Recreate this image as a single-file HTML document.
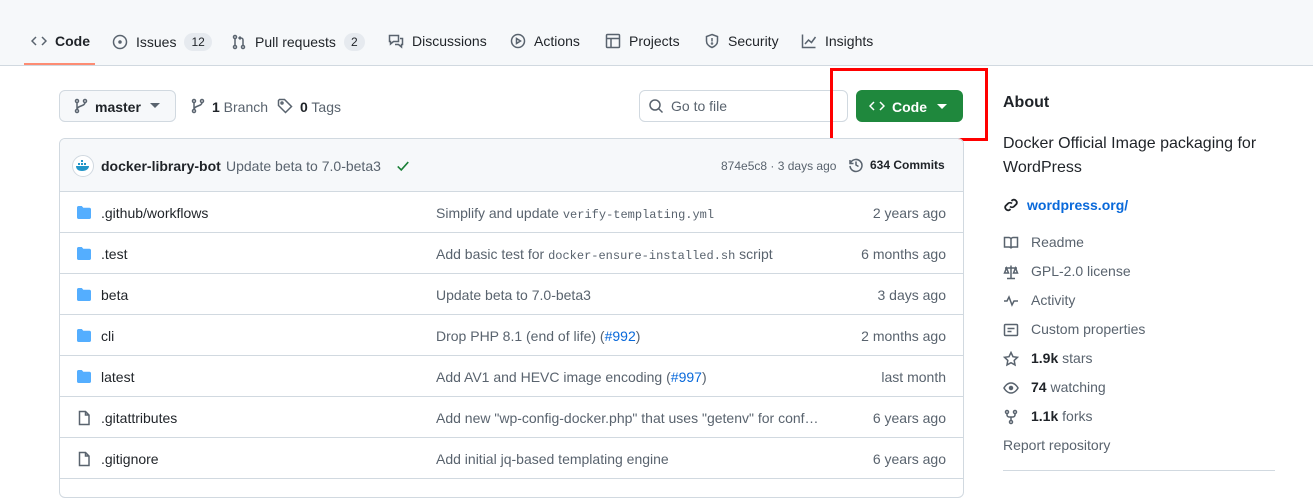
<!DOCTYPE html><html><head><meta charset="utf-8"><style>
*{box-sizing:border-box;margin:0;padding:0}
body{width:1313px;height:484px;overflow:hidden;background:#fff;font-family:"Liberation Sans",sans-serif;color:#1f2328;font-size:14px;position:relative}
.hdr{position:absolute;left:0;top:0;width:1313px;height:66px;background:#f6f8fa;border-bottom:1px solid #d1d9e0}
.tab{position:absolute;top:33px;display:flex;align-items:center;gap:8px;font-size:14px;color:#1f2328}
.tab svg{width:16px;height:16px;fill:none;stroke:#59636e;stroke-width:1.5}
.cnt{background:#e6eaef;border-radius:12px;padding:2px 7px;font-size:12px}
.ul{position:absolute;left:24px;top:63px;width:71px;height:2px;background:#fd8c73}
.abs{position:absolute}
.btn{position:absolute;border:1px solid #d1d9e0;border-radius:6px;background:#f6f8fa}
svg.i{fill:none;stroke:#59636e;stroke-width:1.5}
.box{position:absolute;left:59px;top:138px;width:905px;height:360px;border:1px solid #d1d9e0;border-radius:6px;overflow:hidden}
.ch{height:53px;background:#f6f8fa;border-bottom:1px solid #d1d9e0;position:relative}
.row{height:41px;border-bottom:1px solid #d1d9e0;position:relative}
.row .n{position:absolute;left:41px;top:13px}
.row .m{position:absolute;left:376px;top:13px;color:#59636e}
.row .a{position:absolute;right:17px;top:13px;color:#59636e}
.row svg{position:absolute;left:16px;top:13px}
code{font-family:"Liberation Mono",monospace;font-size:12px}
.lnk{color:#0969da}
.side{position:absolute;left:1003px;color:#59636e}
.side svg{position:absolute;left:0;top:1px}
.side span{position:absolute;left:28px;white-space:nowrap}
b{color:#1f2328}
</style></head><body>
<div class="hdr"></div>
<div class="tab" style="left:31px"><svg viewBox="0 0 16 16"><path d="M5 4L1 8l4 4M11 4l4 4-4 4"/></svg><b style="font-weight:600">Code</b></div>
<div class="tab" style="left:112px"><svg viewBox="0 0 16 16"><circle cx="8" cy="8" r="6.5"/><circle cx="8" cy="8" r="1" fill="#59636e"/></svg>Issues <span class="cnt">12</span></div>
<div class="tab" style="left:231px"><svg viewBox="0 0 16 16"><circle cx="4" cy="3" r="1.5"/><circle cx="4" cy="13" r="1.5"/><circle cx="12" cy="13" r="1.5"/><path d="M4 4.5v7M12 11.5V6a2 2 0 0 0-2-2H8M9.5 2.5L8 4l1.5 1.5"/></svg>Pull requests <span class="cnt">2</span></div>
<div class="tab" style="left:388px"><svg viewBox="0 0 16 16"><path d="M1.5 2.5h9v6h-5l-3 2.5v-2.5h-1zM12 5.5h2.5v6h-1V14l-3-2.5H7"/></svg>Discussions</div>
<div class="tab" style="left:510px"><svg viewBox="0 0 16 16"><circle cx="8" cy="8" r="6.5"/><path d="M6.5 5.5v5l4-2.5z"/></svg>Actions</div>
<div class="tab" style="left:605px"><svg viewBox="0 0 16 16"><rect x="1.5" y="1.5" width="13" height="13" rx="1"/><path d="M1.5 5.5h13M6 5.5v9"/></svg>Projects</div>
<div class="tab" style="left:704px"><svg viewBox="0 0 16 16"><path d="M8 1.5l5.5 2v4.5c0 3.5-3 5.5-5.5 6.5-2.5-1-5.5-3-5.5-6.5V3.5z"/><path d="M8 5v3.5"/><circle cx="8" cy="10.5" r=".5"/></svg>Security</div>
<div class="tab" style="left:801px"><svg viewBox="0 0 16 16"><path d="M1.5 1.5v13h13M4 11l3.5-4 3 2.5L14.5 4"/></svg>Insights</div>
<div class="ul"></div>

<div class="btn" style="left:59px;top:90px;width:117px;height:32px"></div>
<svg class="i abs" style="left:73px;top:98px" width="16" height="16" viewBox="0 0 16 16"><circle cx="4" cy="3" r="1.5"/><circle cx="4" cy="13" r="1.5"/><circle cx="12" cy="3" r="1.5"/><path d="M4 4.5v7M12 4.5c0 4-8 3-8 7"/></svg>
<div class="abs" style="left:95px;top:99px;font-weight:700">master</div>
<svg class="abs" style="left:150px;top:103px" width="10" height="6"><path d="M0 0h10L5 5z" fill="#59636e"/></svg>
<svg class="i abs" style="left:190px;top:98px" width="16" height="16" viewBox="0 0 16 16"><circle cx="4" cy="3" r="1.5"/><circle cx="4" cy="13" r="1.5"/><circle cx="12" cy="3" r="1.5"/><path d="M4 4.5v7M12 4.5c0 4-8 3-8 7"/></svg>
<div class="abs" style="left:212px;top:99px;color:#59636e"><b>1</b> Branch</div>
<svg class="i abs" style="left:277px;top:98px" width="16" height="16" viewBox="0 0 16 16"><path d="M1.5 2.5v5l7 7 6-6-7-7h-5z"/><circle cx="5" cy="5" r="1"/></svg>
<div class="abs" style="left:300px;top:99px;color:#59636e"><b>0</b> Tags</div>

<div class="btn" style="left:639px;top:90px;width:209px;height:32px;background:#fff"></div>
<svg class="i abs" style="left:648px;top:98px" width="16" height="16" viewBox="0 0 16 16"><circle cx="7" cy="7" r="5"/><path d="M10.5 10.5l4 4"/></svg>
<div class="abs" style="left:671px;top:98px;color:#59636e">Go to file</div>
<div class="abs" style="left:856px;top:90px;width:107px;height:32px;background:#1f883d;border-radius:6px;color:#fff"></div>
<svg class="abs" style="left:869px;top:98px" width="16" height="16" viewBox="0 0 16 16" fill="none" stroke="#fff" stroke-width="1.5"><path d="M5 4L1 8l4 4M11 4l4 4-4 4"/></svg>
<div class="abs" style="left:892px;top:99px;color:#fff;font-weight:700">Code</div>
<svg class="abs" style="left:937px;top:104px" width="10" height="6"><path d="M0 0h10L5 5z" fill="#fff"/></svg>
<div class="abs" style="left:830px;top:68px;width:158px;height:73px;border:3px solid #f00"></div>

<div class="box">
<div class="ch">
<div class="abs" style="left:12px;top:16px;width:22px;height:22px;border-radius:50%;border:1px solid #d1d9e0;background:#fff"><svg width="20" height="20" viewBox="0 0 20 20"><path d="M3 10h13c0 3-3 5-7 5s-6-2-6-5z" fill="#2396c8"/><rect x="5" y="7" width="2" height="2" fill="#2396c8"/><rect x="8" y="7" width="2" height="2" fill="#2396c8"/><rect x="11" y="7" width="2" height="2" fill="#2396c8"/><rect x="8" y="4" width="2" height="2" fill="#2396c8"/></svg></div>
<div class="abs" style="left:41px;top:19px;font-weight:700">docker-library-bot</div>
<div class="abs" style="left:166px;top:19px;color:#59636e">Update beta to 7.0-beta3</div>
<svg class="abs" style="left:336px;top:20px" width="14" height="14" viewBox="0 0 16 16" fill="none" stroke="#1a7f37" stroke-width="1.8"><path d="M2 8.5l4 4 8-9"/></svg>
<div class="abs" style="left:661px;top:20px;color:#59636e;font-size:12px">874e5c8 · 3 days ago</div>
<svg class="i abs" style="left:788px;top:18px" width="16" height="16" viewBox="0 0 16 16"><path d="M2 3v3.5h3.5"/><path d="M2.5 6A6 6 0 1 1 2 9"/><path d="M8 4.5V8l2.5 1.5"/></svg>
<div class="abs" style="left:810px;top:19px;font-weight:700;font-size:12px">634 Commits</div>
</div>
<div class="row"><svg width="16" height="16" viewBox="0 0 16 16"><path d="M1 2.5C1 1.7 1.7 1 2.5 1h3.3l1.5 1.8h6.2c.8 0 1.5.7 1.5 1.5v8.2c0 .8-.7 1.5-1.5 1.5h-11C1.7 14 1 13.3 1 12.5z" fill="#54aeff"/></svg><span class="n">.github/workflows</span><span class="m">Simplify and update <code>verify-templating.yml</code></span><span class="a">2 years ago</span></div>
<div class="row"><svg width="16" height="16" viewBox="0 0 16 16"><path d="M1 2.5C1 1.7 1.7 1 2.5 1h3.3l1.5 1.8h6.2c.8 0 1.5.7 1.5 1.5v8.2c0 .8-.7 1.5-1.5 1.5h-11C1.7 14 1 13.3 1 12.5z" fill="#54aeff"/></svg><span class="n">.test</span><span class="m">Add basic test for <code>docker-ensure-installed.sh</code> script</span><span class="a">6 months ago</span></div>
<div class="row"><svg width="16" height="16" viewBox="0 0 16 16"><path d="M1 2.5C1 1.7 1.7 1 2.5 1h3.3l1.5 1.8h6.2c.8 0 1.5.7 1.5 1.5v8.2c0 .8-.7 1.5-1.5 1.5h-11C1.7 14 1 13.3 1 12.5z" fill="#54aeff"/></svg><span class="n">beta</span><span class="m">Update beta to 7.0-beta3</span><span class="a">3 days ago</span></div>
<div class="row"><svg width="16" height="16" viewBox="0 0 16 16"><path d="M1 2.5C1 1.7 1.7 1 2.5 1h3.3l1.5 1.8h6.2c.8 0 1.5.7 1.5 1.5v8.2c0 .8-.7 1.5-1.5 1.5h-11C1.7 14 1 13.3 1 12.5z" fill="#54aeff"/></svg><span class="n">cli</span><span class="m">Drop PHP 8.1 (end of life) (<span class="lnk">#992</span>)</span><span class="a">2 months ago</span></div>
<div class="row"><svg width="16" height="16" viewBox="0 0 16 16"><path d="M1 2.5C1 1.7 1.7 1 2.5 1h3.3l1.5 1.8h6.2c.8 0 1.5.7 1.5 1.5v8.2c0 .8-.7 1.5-1.5 1.5h-11C1.7 14 1 13.3 1 12.5z" fill="#54aeff"/></svg><span class="n">latest</span><span class="m">Add AV1 and HEVC image encoding (<span class="lnk">#997</span>)</span><span class="a">last month</span></div>
<div class="row"><svg class="i" width="16" height="16" viewBox="0 0 16 16"><path d="M3.5 1.5h6l3.5 3.5v9.5h-9.5zM9.5 1.5V5H13"/></svg><span class="n">.gitattributes</span><span class="m">Add new "wp-config-docker.php" that uses "getenv" for conf…</span><span class="a">6 years ago</span></div>
<div class="row"><svg class="i" width="16" height="16" viewBox="0 0 16 16"><path d="M3.5 1.5h6l3.5 3.5v9.5h-9.5zM9.5 1.5V5H13"/></svg><span class="n">.gitignore</span><span class="m">Add initial jq-based templating engine</span><span class="a">6 years ago</span></div>
</div>

<div class="abs" style="left:1003px;top:94px;font-size:16px;font-weight:700">About</div>
<div class="abs" style="left:1003px;top:132px;font-size:16px;line-height:24px;width:280px">Docker Official Image packaging for WordPress</div>
<svg class="abs" style="left:1003px;top:197px" width="16" height="16" viewBox="0 0 16 16" fill="none" stroke="#1f2328" stroke-width="1.8"><path d="M7 9.5a3 3 0 0 0 4 0l2.5-2.5a3 3 0 0 0-4-4L8.5 4M9 6.5a3 3 0 0 0-4 0L2.5 9a3 3 0 0 0 4 4l1-1"/></svg>
<div class="abs lnk" style="left:1027px;top:197px;font-weight:700">wordpress.org/</div>
<div class="side" style="top:234px"><svg class="i" width="16" height="16" viewBox="0 0 16 16"><path d="M1.5 2.5h4.5c1 0 2 1 2 2v9c0-1-1-1.5-2-1.5H1.5zM14.5 2.5H10c-1 0-2 1-2 2v9c0-1 1-1.5 2-1.5h4.5z"/></svg><span>Readme</span></div>
<div class="side" style="top:263px"><svg class="i" width="16" height="16" viewBox="0 0 16 16"><path d="M8 1.5v13M4 14.5h8M2 4h12M3.5 4L1.5 9h4zM12.5 4l-2 5h4z"/></svg><span>GPL-2.0 license</span></div>
<div class="side" style="top:292px"><svg class="i" width="16" height="16" viewBox="0 0 16 16"><path d="M1 8h3l2-4 3 8 2-4h4"/></svg><span>Activity</span></div>
<div class="side" style="top:321px"><svg class="i" width="16" height="16" viewBox="0 0 16 16"><rect x="1.5" y="2.5" width="13" height="11" rx="1"/><path d="M4.5 6.5h7M4.5 9.5h4"/></svg><span>Custom properties</span></div>
<div class="side" style="top:350px"><svg class="i" width="16" height="16" viewBox="0 0 16 16"><path d="M8 1.5l2 4.2 4.5.6-3.3 3.1.8 4.5L8 11.7l-4 2.2.8-4.5-3.3-3.1 4.5-.6z"/></svg><span><b>1.9k</b> stars</span></div>
<div class="side" style="top:379px"><svg class="i" width="16" height="16" viewBox="0 0 16 16"><path d="M1 8s2.5-5 7-5 7 5 7 5-2.5 5-7 5-7-5-7-5z"/><circle cx="8" cy="8" r="1.5" fill="#59636e"/></svg><span><b>74</b> watching</span></div>
<div class="side" style="top:408px"><svg class="i" width="16" height="16" viewBox="0 0 16 16"><circle cx="4" cy="3" r="1.5"/><circle cx="12" cy="3" r="1.5"/><circle cx="8" cy="13" r="1.5"/><path d="M4 4.5v1.5c0 1 1 2 2 2h4c1 0 2-1 2-2V4.5M8 8v3.5"/></svg><span><b>1.1k</b> forks</span></div>
<div class="side" style="top:437px">Report repository</div>
<div class="abs" style="left:1003px;top:470px;width:272px;height:1px;background:#d1d9e0"></div>
</body></html>
